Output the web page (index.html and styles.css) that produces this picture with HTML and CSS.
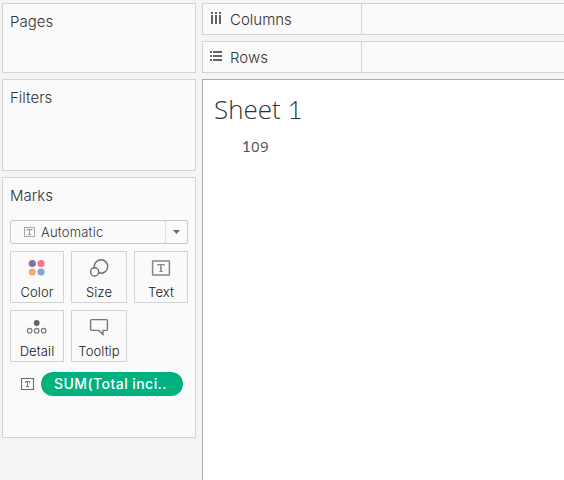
FILE: index.html
```html
<!DOCTYPE html>
<html lang="en">
<head>
<meta charset="utf-8">
<title>Sheet 1</title>
<link rel="stylesheet" href="styles.css">
</head>
<body>
<div class="workspace">
  <aside class="sidebar">
    <section class="card pages"><h2 class="title">Pages</h2></section>
    <section class="card filters"><h2 class="title">Filters</h2></section>
    <section class="card marks">
      <h2 class="title">Marks</h2>
      <div class="select">
        <svg class="select-icon" width="11" height="10" viewBox="0 0 11 10"><rect x=".5" y=".5" width="10" height="9" fill="none" stroke="#aaa"/><path d="M3 3.8V2.5H8V3.8M5.5 2.5V7.5M4 7.5H7" fill="none" stroke="#999"/></svg>
        <span class="select-label">Automatic</span>
        <span class="select-arrow"><svg width="7" height="4" viewBox="0 0 7 4"><path d="M0 0H7L3.5 4Z" fill="#666"/></svg></span>
      </div>
      <div class="grid">
        <div class="tile">
          <svg width="54" height="32" viewBox="0 0 54 32"><circle cx="22.3" cy="11.5" r="3.6" fill="#86709a"/><circle cx="31" cy="11.5" r="3.6" fill="#f97486"/><circle cx="22.3" cy="20" r="3.6" fill="#f2a77c"/><circle cx="31" cy="20" r="3.6" fill="#83a5cd"/></svg>
          <span class="label">Color</span>
        </div>
        <div class="tile">
          <svg width="54" height="32" viewBox="0 0 54 32" fill="none" stroke="#6b6b6b" stroke-width="1.4"><circle cx="29" cy="14.5" r="6.7"/><circle cx="22.6" cy="19.9" r="4.1" fill="#fafafa"/></svg>
          <span class="label">Size</span>
        </div>
        <div class="tile">
          <svg width="52" height="32" viewBox="0 0 52 32" fill="none" stroke="#858585"><rect x="17.6" y="9.1" width="16.8" height="13.8" rx=".5" stroke-width="1.5"/><path d="M23 14V12.5H29V14M24.3 19.5H27.7" stroke-width="1.1"/><path d="M26 12.5V19.5" stroke-width="1.6"/></svg>
          <span class="label">Text</span>
        </div>
        <div class="tile">
          <svg width="54" height="32" viewBox="0 0 54 32"><circle cx="26.7" cy="12" r="2.9" fill="#626262"/><g fill="none" stroke="#777" stroke-width="1.1"><circle cx="19.7" cy="19.7" r="2.3"/><circle cx="26.7" cy="19.7" r="2.3"/><circle cx="33.7" cy="19.7" r="2.3"/></g></svg>
          <span class="label">Detail</span>
        </div>
        <div class="tile">
          <svg width="54" height="32" viewBox="0 0 54 32"><path d="M19.6 8.6H34.4Q35.4 8.6 35.4 9.6V18.4Q35.4 19.4 34.4 19.4H31V23.3L26.7 19.4H19.6Q18.6 19.4 18.6 18.4V9.6Q18.6 8.6 19.6 8.6Z" fill="none" stroke="#777" stroke-width="1.4"/></svg>
          <span class="label">Tooltip</span>
        </div>
      </div>
      <div class="field">
        <svg width="13" height="12" viewBox="0 0 13 12"><rect x=".5" y=".5" width="12" height="11" fill="none" stroke="#6b6b6b"/><path d="M4.5 5V3.5H8.5V5M6.5 3.5V8.5M5 8.5H8" fill="none" stroke="#777"/></svg>
        <div class="pill"><span class="pill-text">SUM(Total inci..</span></div>
      </div>
    </section>
  </aside>
  <main class="main">
    <div class="shelf">
      <div class="shelf-name">
        <svg width="13" height="13" viewBox="0 0 13 13" fill="#636363" shape-rendering="crispEdges"><path d="M1 0h2v2H1zM5 0h2v2H5zM9 0h2v2H9zM1 3h2v9H1zM5 3h2v9H5zM9 3h2v9H9z"/></svg>
        <span class="shelf-label">Columns</span>
      </div>
    </div>
    <div class="shelf">
      <div class="shelf-name rows">
        <svg width="13" height="13" viewBox="0 0 13 13" fill="#636363" shape-rendering="crispEdges"><path d="M0 0h2v2H0zM0 4h2v2H0zM0 8h2v2H0zM3 0h9v2H3zM3 4h9v2H3zM3 8h9v2H3z"/></svg>
        <span class="shelf-label">Rows</span>
      </div>
    </div>
    <section class="sheet">
      <h1 class="sheet-title">Sheet <span class="numeral">1</span></h1>
      <div class="value"><span class="numeral">1</span>09</div>
    </section>
  </main>
</div>
</body>
</html>
```
FILE: styles.css
```css
* { box-sizing: border-box; }
body {
  margin: 0;
  background: #f4f4f4;
  color: #333;
  font-family: "Inter", "Open Sans", sans-serif;
  font-weight: 300;
  overflow: hidden;
}
svg { display: block; flex: none; }
.workspace { display: flex; gap: 6px; height: 480px; padding: 3px 0 0 2px; }
.sidebar { display: flex; flex-direction: column; gap: 6px; width: 194px; flex: none; }
.card { border: 1px solid #d3d3d3; background: #fafafa; padding: 8px 7px 0; }
.pages { height: 70px; }
.filters { height: 92px; }
.marks { height: 261px; }
.title { margin: 0; font-size: 15px; font-weight: 300; line-height: 20px; white-space: nowrap; }
.select {
  display: flex;
  align-items: center;
  width: 178px;
  height: 24px;
  margin-top: 14px;
  border: 1px solid #c8c8c8;
  border-radius: 2px;
}
.select-icon { margin-left: 13px; }
.select-label { margin-left: 6px; font-size: 13px; line-height: 20px; letter-spacing: 0.2px; white-space: nowrap; }
.select-arrow {
  display: flex;
  align-items: center;
  justify-content: center;
  width: 22px;
  height: 22px;
  margin-left: auto;
  border-left: 1px solid #dedede;
}
.grid { display: grid; grid-template-columns: 54px 56px 54px; gap: 7px; margin-top: 7px; }
.tile {
  display: flex;
  flex-direction: column;
  align-items: center;
  height: 52px;
  border: 1px solid #d3d3d3;
  color: #161616;
}
.label { margin-top: -1px; font-size: 13px; line-height: 18px; letter-spacing: 0.1px; white-space: nowrap; }
.field { display: flex; align-items: center; height: 24px; margin: 10px 0 0 11px; }
.pill {
  display: flex;
  align-items: center;
  width: 142px;
  height: 24px;
  margin-left: 7px;
  padding-left: 13px;
  border-radius: 12px;
  background: #00b180;
  color: #fff;
}
.pill-text { font-size: 14px; font-weight: 500; line-height: 20px; letter-spacing: 0.44px; white-space: nowrap; }
.main { display: flex; flex-direction: column; flex: 1; min-width: 0; gap: 6px; }
.shelf { height: 32px; flex: none; border: solid #d3d3d3; border-width: 1px 0 1px 1px; background: #fafafa; }
.shelf-name { display: flex; align-items: center; width: 159px; height: 30px; padding-left: 7px; border-right: 1px solid #d3d3d3; }
.shelf-name svg { margin-bottom: 1px; }
.shelf-name.rows svg { margin-bottom: 0; }
.shelf-label { margin: 2px 0 0 7px; font-size: 15px; line-height: 20px; white-space: nowrap; }
.sheet { flex: 1; border: solid #aaa; border-width: 1px 0 0 1px; background: #fff; padding: 11px 0 0 11px; }
.sheet-title { margin: 0; font-family: "Open Sans", sans-serif; font-size: 26px; font-weight: 300; line-height: 36px; white-space: nowrap; }
.numeral { font-family: "Lato", sans-serif; line-height: 1; }
.value { margin: 9px 0 0 28px; font-family: "Open Sans", sans-serif; font-size: 15px; font-weight: 400; color: #505050; line-height: 20px; letter-spacing: 0.3px; }
```
